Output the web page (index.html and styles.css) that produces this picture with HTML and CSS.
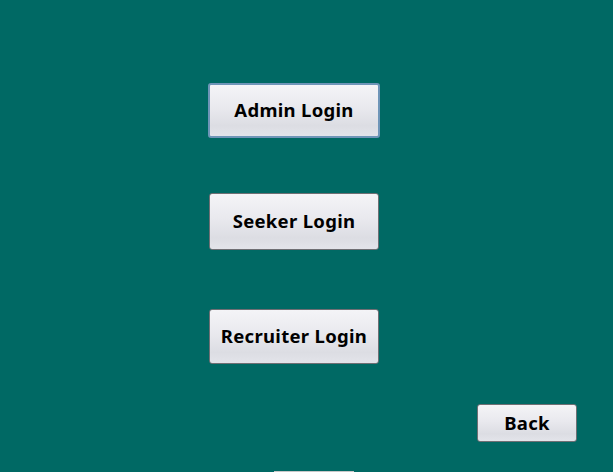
FILE: index.html
```html
<!DOCTYPE html>
<html>
<head>
<meta charset="utf-8">
<link rel="stylesheet" href="styles.css">
</head>
<body>
<div class="screen">
  <div class="menu">
    <button class="btn btn-main focused">Admin Login</button>
    <button class="btn btn-main seeker">Seeker Login</button>
    <button class="btn btn-main recruiter">Recruiter Login</button>
  </div>
  <div class="footer">
    <button class="btn btn-back">Back</button>
  </div>
  <div class="bottom-line"></div>
</div>
</body>
</html>
```
FILE: styles.css
```css
html, body {
  margin: 0;
  padding: 0;
  background: #006964;
}
.screen {
  width: 613px;
  height: 472px;
  position: relative;
  overflow: hidden;
  background: #006964;
}
.menu {
  display: flex;
  flex-direction: column;
  align-items: flex-start;
  padding-top: 83px;
  padding-left: 209px;
}
.btn {
  font-family: "Noto Sans", "DejaVu Sans", sans-serif;
  font-weight: bold;
  color: #000;
  border: 1px solid #6f6f74;
  border-radius: 3px;
  background: linear-gradient(to bottom, #f4f4f7 0%, #e9e9ee 45%, #dcdde3 80%, #e3e4ea 100%);
  padding: 0 0 2px 0;
  margin: 0;
  box-sizing: border-box;
  cursor: default;
  letter-spacing: 0.3px;
}
.btn-main {
  width: 170px;
  height: 55px;
  font-size: 18.5px;
}
.focused {
  margin-left: -1px;
  width: 172px;
  border: 2px solid #6f95b8;
}
.seeker {
  margin-top: 55px;
  height: 57px;
}
.recruiter {
  margin-top: 59px;
}
.footer {
  display: flex;
  justify-content: flex-end;
  padding-right: 36px;
  margin-top: 40px;
}
.btn-back {
  width: 100px;
  height: 38px;
  font-size: 18.5px;
}
.bottom-line {
  position: absolute;
  left: 274px;
  bottom: 0;
  width: 80px;
  height: 1px;
  background: #c8c8c8;
}
```
